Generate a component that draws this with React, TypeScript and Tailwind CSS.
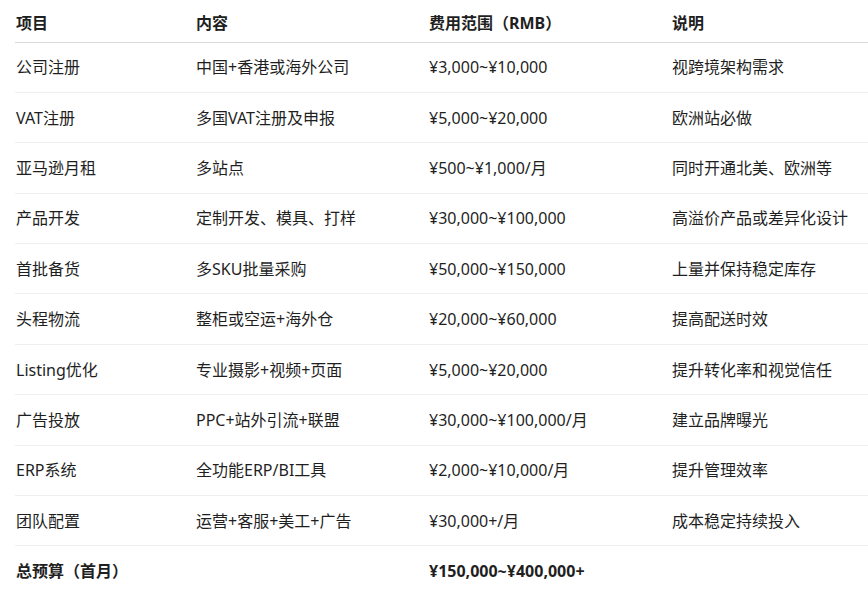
const rows = [
  ["公司注册", "中国+香港或海外公司", "¥3,000~¥10,000", "视跨境架构需求"],
  ["VAT注册", "多国VAT注册及申报", "¥5,000~¥20,000", "欧洲站必做"],
  ["亚马逊月租", "多站点", "¥500~¥1,000/月", "同时开通北美、欧洲等"],
  ["产品开发", "定制开发、模具、打样", "¥30,000~¥100,000", "高溢价产品或差异化设计"],
  ["首批备货", "多SKU批量采购", "¥50,000~¥150,000", "上量并保持稳定库存"],
  ["头程物流", "整柜或空运+海外仓", "¥20,000~¥60,000", "提高配送时效"],
  ["Listing优化", "专业摄影+视频+页面", "¥5,000~¥20,000", "提升转化率和视觉信任"],
  ["广告投放", "PPC+站外引流+联盟", "¥30,000~¥100,000/月", "建立品牌曝光"],
  ["ERP系统", "全功能ERP/BI工具", "¥2,000~¥10,000/月", "提升管理效率"],
  ["团队配置", "运营+客服+美工+广告", "¥30,000+/月", "成本稳定持续投入"],
];

export default function App() {
  return (
    <div
      className="min-h-screen overflow-hidden bg-white pl-[15px] text-[16px] text-[#1f1f1f]"
      style={{ fontFamily: '"Noto Sans", "Noto Sans CJK SC", sans-serif' }}
    >
      <table className="w-[900px] table-fixed border-collapse">
        <colgroup>
          <col className="w-[180px]" />
          <col className="w-[233px]" />
          <col className="w-[243px]" />
          <col />
        </colgroup>
        <thead>
          <tr className="border-b border-[#d9d9d9]">
            {["项目", "内容", "费用范围（RMB）", "说明"].map((h) => (
              <th key={h} className="h-[42px] px-px pt-[5px] text-left align-middle font-bold leading-[22px]">
                {h}
              </th>
            ))}
          </tr>
        </thead>
        <tbody>
          {rows.map((r) => (
            <tr key={r[0]} className="border-b border-[#efefef]">
              {r.map((c, i) => (
                <td key={i} className="h-[50.4px] px-px align-middle leading-[22px]">
                  {c}
                </td>
              ))}
            </tr>
          ))}
          <tr>
            <td className="h-[50px] px-px align-middle font-bold leading-[22px]">总预算（首月）</td>
            <td className="px-px"></td>
            <td className="px-px align-middle font-bold leading-[22px]">¥150,000~¥400,000+</td>
            <td className="px-px"></td>
          </tr>
        </tbody>
      </table>
    </div>
  );
}
